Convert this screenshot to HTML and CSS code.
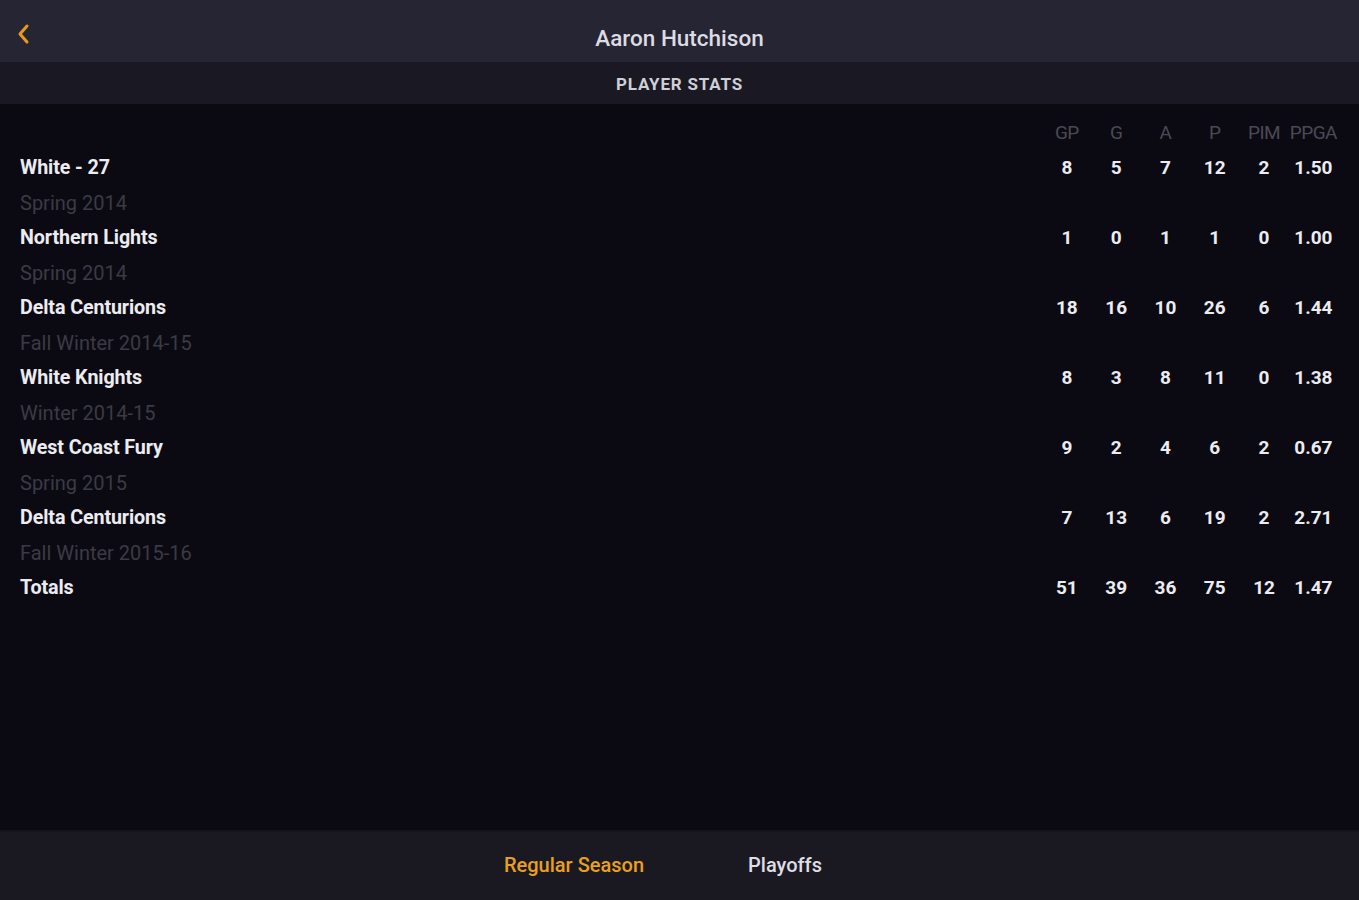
FILE: index.html
```html
<!DOCTYPE html>
<html>
<head>
<meta charset="utf-8">
<link rel="stylesheet" href="styles.css">
</head>
<body>
<div class="app">
  <header class="topbar">
    <button class="back" aria-label="Back">
      <svg width="14" height="22" viewBox="0 0 14 22"><path d="M11 3 L4 11 L11 19" fill="none" stroke="#e89a1c" stroke-width="3" stroke-linecap="round" stroke-linejoin="round"/></svg>
    </button>
    <h1 class="title">Aaron Hutchison</h1>
  </header>
  <div class="subbar">PLAYER STATS</div>
  <main class="content">
    <div class="row head">
      <div class="name"></div>
      <div class="cols"><span>GP</span><span>G</span><span>A</span><span>P</span><span>PIM</span><span>PPGA</span></div>
    </div>

    <div class="row team"><div class="name">White - 27</div><div class="cols"><span>8</span><span>5</span><span>7</span><span>12</span><span>2</span><span>1.50</span></div></div>
    <div class="row season"><div class="name">Spring 2014</div></div>

    <div class="row team"><div class="name">Northern Lights</div><div class="cols"><span>1</span><span>0</span><span>1</span><span>1</span><span>0</span><span>1.00</span></div></div>
    <div class="row season"><div class="name">Spring 2014</div></div>

    <div class="row team"><div class="name">Delta Centurions</div><div class="cols"><span>18</span><span>16</span><span>10</span><span>26</span><span>6</span><span>1.44</span></div></div>
    <div class="row season"><div class="name">Fall Winter 2014-15</div></div>

    <div class="row team"><div class="name">White Knights</div><div class="cols"><span>8</span><span>3</span><span>8</span><span>11</span><span>0</span><span>1.38</span></div></div>
    <div class="row season"><div class="name">Winter 2014-15</div></div>

    <div class="row team"><div class="name">West Coast Fury</div><div class="cols"><span>9</span><span>2</span><span>4</span><span>6</span><span>2</span><span>0.67</span></div></div>
    <div class="row season"><div class="name">Spring 2015</div></div>

    <div class="row team"><div class="name">Delta Centurions</div><div class="cols"><span>7</span><span>13</span><span>6</span><span>19</span><span>2</span><span>2.71</span></div></div>
    <div class="row season"><div class="name">Fall Winter 2015-16</div></div>

    <div class="row team"><div class="name">Totals</div><div class="cols"><span>51</span><span>39</span><span>36</span><span>75</span><span>12</span><span>1.47</span></div></div>
  </main>
  <footer class="tabs">
    <div class="tab active">Regular Season</div>
    <div class="tab">Playoffs</div>
  </footer>
</div>
</body>
</html>
```

FILE: styles.css
```css
* { box-sizing: border-box; }
html, body { margin: 0; padding: 0; height: 100%; }
body {
  background: #0b0a12;
  font-family: Roboto, "Noto Sans", "Liberation Sans", sans-serif;
  color: #e6e6ea;
}
.app {
  display: flex;
  flex-direction: column;
  height: 900px;
  width: 1359px;
}
.topbar {
  height: 62px;
  background: #262533;
  display: flex;
  align-items: center;
  justify-content: center;
  position: relative;
}
.back {
  position: absolute;
  left: 16px;
  top: 23px;
  background: none;
  border: 0;
  padding: 0;
  width: 16px;
  height: 24px;
  display: flex;
}
.title {
  margin: 0;
  font-size: 22.5px;
  font-weight: 500;
  color: #dcdce2;
  padding-top: 13px;
}
.subbar {
  height: 42px;
  background: #1a1923;
  display: flex;
  align-items: center;
  justify-content: center;
  font-size: 17px;
  font-weight: 700;
  color: #cfcfd6;
  letter-spacing: 0.8px;
  padding-top: 2px;
}
.content {
  flex: 1;
  padding: 11px 21px 0 20px;
}
.row {
  display: flex;
  align-items: center;
  height: 35px;
}
.name { flex: 1; }
.cols {
  display: flex;
}
.cols span {
  width: 49.3px;
  text-align: center;
  white-space: nowrap;
}
.head .cols span {
  font-size: 19px;
  color: #4a4955;
  letter-spacing: -0.5px;
}
.team { font-size: 19.7px; font-weight: 700; color: #ececf0; letter-spacing: -0.1px; }
.team .cols span { font-size: 19px; letter-spacing: 0; }
.season .name { font-size: 20px; color: #3b3a45; }
.tabs {
  height: 70px;
  background: #1a1922;
  border-top: 2px solid #15141c;
  display: flex;
  justify-content: center;
  align-items: center;
  padding-bottom: 2px;
}
.tab {
  width: 211px;
  text-align: center;
  font-size: 20px;
  font-weight: 500;
  color: #dedee3;
}
.tab.active { color: #e8a020; }
```
